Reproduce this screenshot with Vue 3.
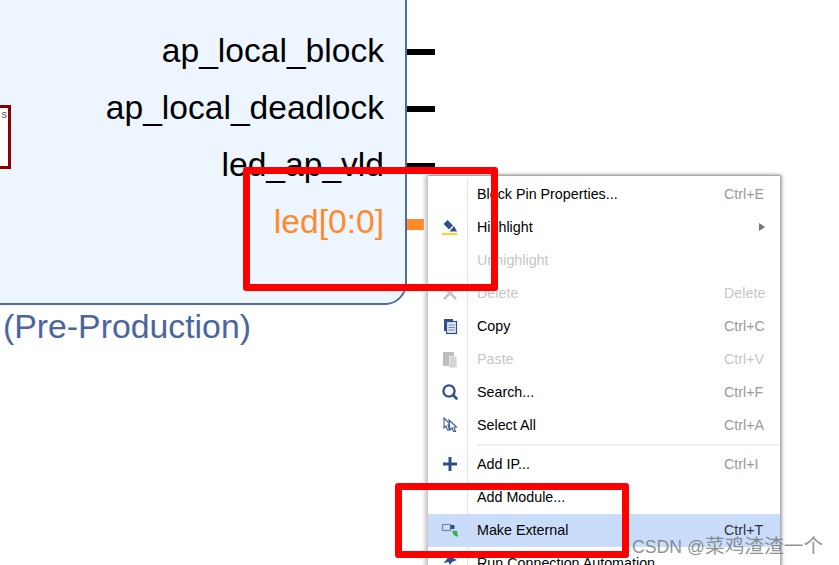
<script setup>
const ports = [
  { name: 'ap_local_block', cls: '' },
  { name: 'ap_local_deadlock', cls: '' },
  { name: 'led_ap_vld', cls: '' },
  { name: 'led[0:0]', cls: 'orange' }
]
const items = [
  { label: 'Block Pin Properties...', key: 'Ctrl+E' },
  { label: 'Highlight', icon: 'highlight', arrow: true },
  { label: 'Unhighlight', off: true },
  { label: 'Delete', key: 'Delete', icon: 'delete', off: true },
  { label: 'Copy', key: 'Ctrl+C', icon: 'copy' },
  { label: 'Paste', key: 'Ctrl+V', icon: 'paste', off: true },
  { label: 'Search...', key: 'Ctrl+F', icon: 'search' },
  { label: 'Select All', key: 'Ctrl+A', icon: 'select', sepAfter: true },
  { label: 'Add IP...', key: 'Ctrl+I', icon: 'plus' },
  { label: 'Add Module...' },
  { label: 'Make External', key: 'Ctrl+T', icon: 'external', active: true },
  { label: 'Run Connection Automation', icon: 'run' }
]
</script>

<template>
  <div class="canvas">
    <div class="block">
      <div class="inner"><span class="inner-text">s</span></div>
      <ul class="ports">
        <li v-for="p in ports" :key="p.name" class="port" :class="p.cls">{{ p.name }}<i class="pin"></i></li>
      </ul>
    </div>
    <div class="caption">(Pre-Production)</div>

    <div class="menu">
      <template v-for="it in items" :key="it.label">
        <div class="row" :class="{ off: it.off, active: it.active }">
          <span class="ico">
            <svg v-if="it.icon" width="20" height="20" viewBox="0 0 20 20">
              <template v-if="it.icon === 'highlight'">
                <path d="M7.5 3 L13 8.5 L9 12.5 L3.5 7 Z" fill="#2f4f8f" />
                <path d="M14 9 L17 14.5 L9.5 14.5 Z" fill="#2f4f8f" />
                <rect x="2" y="16" width="15" height="2" fill="#ffd21e" />
              </template>
              <path v-else-if="it.icon === 'delete'" d="M4 4 L16 16 M16 4 L4 16" stroke="#c4c4c4" stroke-width="2.6" fill="none" />
              <template v-else-if="it.icon === 'copy'">
                <path d="M4 3 H13 V5 H7 V15 H4 Z" fill="#2f4f8f" />
                <rect x="6.5" y="5.5" width="10" height="12" fill="#dfe5f1" stroke="#2f4f8f" stroke-width="1.2" />
                <path d="M8.5 9 H14.5 M8.5 11.5 H14.5 M8.5 14 H14.5" stroke="#6f86b3" stroke-width="1.2" />
              </template>
              <template v-else-if="it.icon === 'paste'">
                <rect x="3" y="3" width="11" height="14" fill="#bdbdbd" />
                <rect x="9.5" y="7.5" width="7" height="11" fill="#d4d4d4" stroke="#e6e6e6" />
              </template>
              <template v-else-if="it.icon === 'search'">
                <circle cx="9" cy="9" r="5.6" fill="none" stroke="#2f4f8f" stroke-width="2.3" />
                <path d="M13 13 L16.5 16.5" stroke="#2f4f8f" stroke-width="2.6" stroke-linecap="round" />
              </template>
              <template v-else-if="it.icon === 'select'">
                <path d="M4 3 L10.5 9.5 L8 10 L9.5 15 L7.5 15 L6 11 L4 13 Z" fill="#fff" stroke="#3d5a94" stroke-width="1.1" />
                <path d="M9 5 L16.5 12 L14 12.5 L15.5 16.5 L13.5 16.5 L12 13 L10 15 Z" fill="#fff" stroke="#3d5a94" stroke-width="1.1" />
              </template>
              <path v-else-if="it.icon === 'plus'" d="M10 3 V17 M3 10 H17" stroke="#2f4f8f" stroke-width="3" fill="none" />
              <template v-else-if="it.icon === 'external'">
                <rect x="2.5" y="4.5" width="8" height="6" fill="none" stroke="#7d8794" stroke-width="1.2" />
                <rect x="10.5" y="5" width="4" height="4" fill="#2f4f8f" />
                <path d="M12 10.5 L17 11 L18 17 L15.5 16 L13.5 14.5 Z" fill="#34b04d" />
              </template>
              <path v-else-if="it.icon === 'run'" d="M9 1 L14 1 L13 5 L17 7 L12 9 L10 12 L8.5 9 L3.5 10 L7 6 Z" fill="#2f4f8f" />
            </svg>
          </span>
          <span class="label">{{ it.label }}</span>
          <span v-if="it.key" class="key">{{ it.key }}</span>
          <span v-if="it.arrow" class="arrow"></span>
        </div>
        <div v-if="it.sepAfter" class="sep"></div>
      </template>
    </div>

    <div class="mark mark-a"></div>
    <div class="mark mark-b"></div>
    <div class="watermark">CSDN @<span class="wm-cjk">菜鸡渣渣一个</span></div>
  </div>
</template>

<style>
html, body { margin: 0; background: #fff; overflow: hidden; }
</style>

<style scoped>
.canvas {
  position: relative;
  width: 839px;
  height: 565px;
  overflow: hidden;
  background: #fff;
  font-family: "Liberation Sans", Arial, sans-serif;
}
.block {
  position: absolute;
  left: -30px;
  top: -30px;
  width: 433px;
  height: 331px;
  background: #edf5ff;
  border: 2px solid #4f6ba6;
  border-radius: 0 0 22px 0;
}
.inner {
  position: absolute;
  left: 0;
  top: 133px;
  width: 33px;
  height: 58px;
  background: #fff;
  border: 3px solid #8b0000;
  overflow: hidden;
}
.inner-text {
  position: absolute;
  right: 1px;
  top: 0;
  font-size: 11px;
  color: #555;
}
.ports {
  list-style: none;
  margin: 0;
  padding: 50px 21px 0 0;
  display: flex;
  flex-direction: column;
  align-items: flex-end;
}
.port {
  position: relative;
  height: 57px;
  line-height: 57px;
  font-size: 33.6px;
  color: #000;
  white-space: nowrap;
}
.pin {
  position: absolute;
  left: 100%;
  top: 27px;
  margin-left: 23px;
  width: 28px;
  height: 6px;
  background: #000;
}
.orange { color: #ff8a2b; }
.orange .pin {
  width: 17px;
  height: 11px;
  top: 26px;
  background: #ff8a2b;
}
.caption {
  position: absolute;
  left: 3px;
  top: 306px;
  font-size: 33.8px;
  line-height: 40px;
  color: #4a66a0;
  white-space: nowrap;
}
.menu {
  position: absolute;
  left: 428px;
  top: 175px;
  width: 352px;
  height: 420px;
  box-sizing: border-box;
  padding-top: 2px;
  background: #fff;
  border-top: 1px solid #a8a8a8;
  box-shadow: 2px 0 3px #a0a0a0, -3px 0 4px #c4c4c4;
}
.menu::before {
  content: "";
  position: absolute;
  left: 39px;
  top: 3px;
  bottom: 0;
  width: 1px;
  background: #e3e3e3;
}
.row {
  position: relative;
  display: flex;
  align-items: center;
  box-sizing: border-box;
  height: 33px;
  padding-bottom: 1px;
  font-size: 14.3px;
  color: #000;
}
.ico {
  flex: none;
  width: 49px;
  display: flex;
  justify-content: flex-start;
  padding-left: 12px;
  box-sizing: border-box;
}
.ico svg { display: block; }
.label { flex: 1; white-space: nowrap; }
.key { flex: none; width: 56px; color: #9a9a9a; white-space: nowrap; }
.off .label, .off .key { color: #c6c6c6; }
.active { background: #c9ddfb; }
.active .key { color: #333; }
.arrow {
  flex: none;
  width: 0;
  height: 0;
  margin-right: 15px;
  border-left: 6px solid #777;
  border-top: 4.5px solid transparent;
  border-bottom: 4.5px solid transparent;
}
.sep {
  height: 2px;
  margin: 2px 0 2px 49px;
  background: #efefef;
}
.mark {
  position: absolute;
  box-sizing: border-box;
  border: 7px solid #ff0000;
  border-radius: 3px;
}
.mark-a { left: 243px; top: 167px; width: 255px; height: 124px; }
.mark-b { left: 395px; top: 483px; width: 234px; height: 75px; }
.watermark {
  position: absolute;
  left: 632px;
  top: 535px;
  font-size: 17.7px;
  line-height: 22px;
  color: rgba(110, 110, 110, 0.75);
  white-space: nowrap;
  font-family: "Liberation Sans", "Noto Sans CJK SC", sans-serif;
}
.wm-cjk { font-size: 19.7px; }
</style>
